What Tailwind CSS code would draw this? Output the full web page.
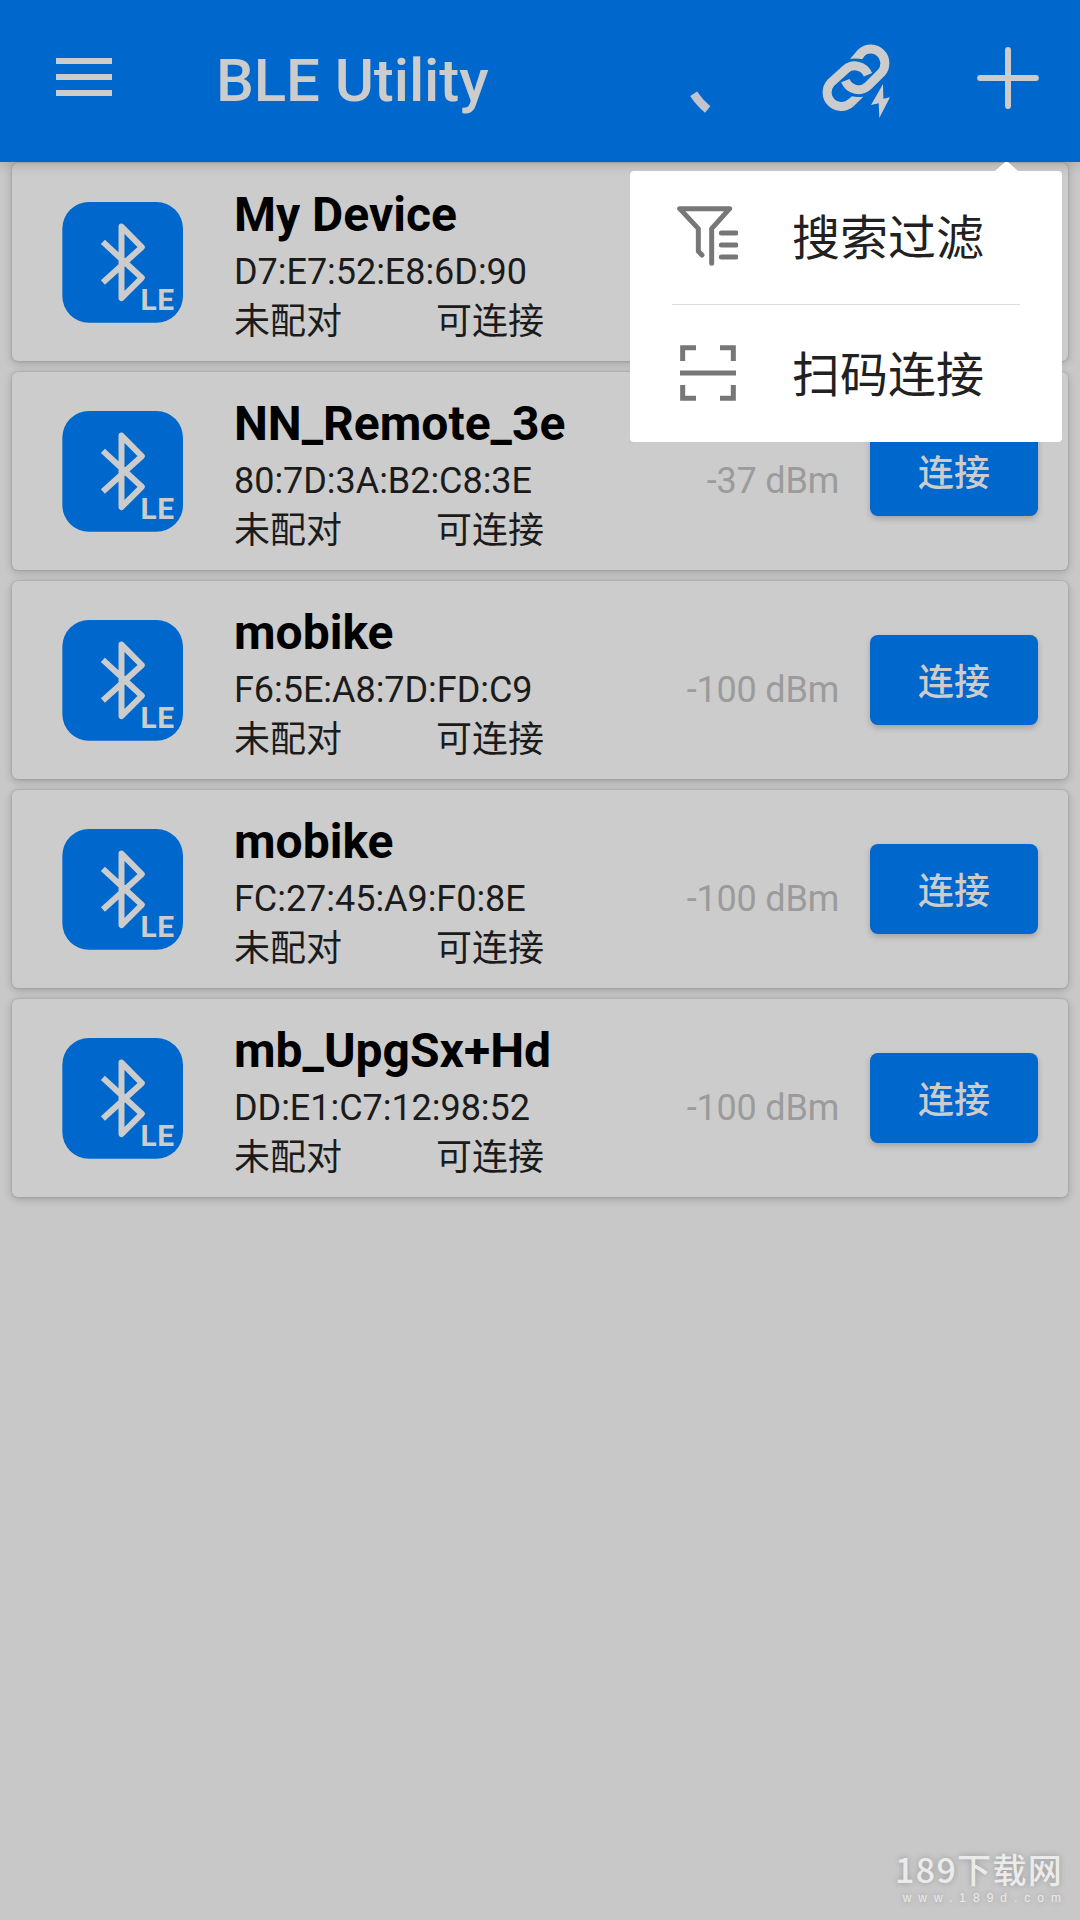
<!DOCTYPE html>
<html lang="zh-CN">
<head>
<meta charset="utf-8">
<title>BLE Utility</title>
<script src="https://cdn.jsdelivr.net/npm/@tailwindcss/browser@4"></script>
</head>
<body class="relative h-[1920px] w-[1080px] overflow-hidden bg-[#c8c8c8] font-['Roboto','Noto_Sans_CJK_SC',sans-serif]">
<header class="relative z-10 flex h-[162px] items-start bg-[#0067cc] text-[#ccc] shadow-[0_2px_12px_rgba(0,0,0,0.2)]">
  <button class="mt-[58px] ml-[56px] flex w-[56px] flex-none flex-col gap-[10px]" aria-label="Menu">
    <span class="h-[6px] w-full bg-[#ccc]"></span>
    <span class="h-[6px] w-full bg-[#ccc]"></span>
    <span class="h-[6px] w-full bg-[#ccc]"></span>
  </button>
  <h1 class="mt-[46px] ml-[104px] w-[424px] flex-none text-[60px] leading-[70px] font-medium tracking-[-0.1px]">BLE Utility</h1>
  <!-- actions: progress, quick link, add -->
  <svg class="mt-[20px] h-[110px] w-[440px] flex-none" viewBox="0 0 1320 330" fill="none">
    <path d="M161 221.500Q178 248 203 268.500" stroke="#c3c3cf" stroke-width="25"/>
    <path d="M664 98A42.500 42.500 0 0 1 724 158L685 197A42.500 42.500 0 0 1 616 182" stroke="#ccc" stroke-width="27"/>
    <path d="M655 88L630 117Q648 114 667 118L675 106Z" fill="#ccc"/>
    <path d="M684 164A42.500 42.500 0 0 0 617 148L572 189A42.500 42.500 0 0 0 632 249" stroke="#ccc" stroke-width="27"/>
    <path d="M641 259L670 230Q652 233 636 229L621 241Z" fill="#ccc"/>
    <path d="M729 192L693 255L716 250L718 294L750 232L730 236Z" fill="#ccc"/>
    <path d="M1020.500 174H1187.500M1104 90V258" stroke="#ccc" stroke-width="18" stroke-linecap="round"/>
  </svg>
</header>

<main id="devices" class="mt-px flex flex-col gap-[11px] px-3"></main>

<!-- popup menu -->
<nav class="absolute top-[162px] left-[630px] z-20 w-[432px]">
  <svg class="ml-[365px] block h-[9px] w-[23px]" viewBox="0 0 23 9"><path d="M0 9L9.500 .5Q11.500 -.7 13.500 .5L23 9Z" fill="#fff"/></svg>
  <div class="flex h-[271px] flex-col rounded-[4px] bg-white px-[42px]">
    <div class="flex h-[133px] items-center">
      <svg class="mb-[8px] h-[66px] w-[66px]" viewBox="156 150 198 198" fill="none" stroke="#777" stroke-width="15" stroke-linecap="round" stroke-linejoin="round">
        <path d="M246 312L235 301V233L179 173H329L275 233V337M304 246H349M304 282H349M304 318H349"/>
      </svg>
      <span class="mt-[2px] ml-[54px] text-[48px] leading-[56px] text-[#212121]">搜索过滤</span>
    </div>
    <div class="h-px flex-none bg-[#dcdcdc]"></div>
    <div class="flex h-[137px] items-center">
      <svg class="mb-[2px] h-[66px] w-[66px]" viewBox="156 570 198 198" fill="none" stroke="#777" stroke-width="15">
        <path d="M188 633V593H228M300 593H340V633M188 705V745H228M300 745H340V705M180 669H348"/>
      </svg>
      <span class="mt-[4px] ml-[54px] text-[48px] leading-[56px] text-[#212121]">扫码连接</span>
    </div>
  </div>
</nav>

<footer class="absolute top-[1847px] right-[17px] text-right text-[#ebebeb] [text-shadow:0_0_6px_rgba(0,0,0,0.25)]">
  <p class="font-['Noto_Sans_CJK_SC',sans-serif] text-[34px] leading-[44px] font-medium tracking-[1.3px] whitespace-nowrap">189下载网</p>
  <p class="-mr-[5px] font-['Liberation_Sans',sans-serif] text-[12px] leading-[14px] tracking-[7px] whitespace-nowrap">www.189d.com</p>
</footer>

<script>
const devices = [
  // the open menu covers the first row's signal level and button
  ["My Device", "D7:E7:52:E8:6D:90", null],
  ["NN_Remote_3e", "80:7D:3A:B2:C8:3E", "-37 dBm"],
  ["mobike", "F6:5E:A8:7D:FD:C9", "-100 dBm"],
  ["mobike", "FC:27:45:A9:F0:8E", "-100 dBm"],
  ["mb_UpgSx+Hd", "DD:E1:C7:12:98:52", "-100 dBm"],
];
document.getElementById("devices").innerHTML = devices.map(([name, mac, rssi]) => `
  <article class="flex h-[198px] items-start rounded-[6px] bg-[#ccc] shadow-[0_2px_8px_rgba(0,0,0,0.22),0_0_2px_rgba(0,0,0,0.2)]">
    <svg class="mt-[39px] ml-[50px] h-[121px] w-[121px] flex-none" viewBox="187 154 364 364" fill="none">
      <rect x="188" y="154" width="363" height="363" rx="80" fill="#0067cc"/>
      <path d="M310 274L427 382L366 443V228L427 290L310 396" stroke="#ccc" stroke-width="18" stroke-linejoin="round"/>
      <text x="423" y="480" font-family="Roboto" font-weight="700" font-size="90" fill="#ccc" textLength="101">LE</text>
    </svg>
    <div class="mt-[24px] ml-[51px] w-[370px] flex-none">
      <h2 class="text-[48px] leading-[56px] font-bold text-black">${name}</h2>
      <p class="text-[36px] leading-[58px] tracking-[-0.04px] text-[#1b1b1b]">${mac}</p>
      <p class="flex text-[36px] leading-[42px] text-[#1b1b1b]"><span class="w-[202px]">未配对</span><span>可连接</span></p>
    </div>
    ${rssi ? `<span class="mt-[88px] ml-auto text-[36px] leading-[42px] tracking-[-0.2px] text-[#9b9b9b]">${rssi}</span>
    <button class="mt-[54px] mr-[30px] ml-[31px] h-[90px] w-[168px] flex-none rounded-[8px] bg-[#0067cc] pt-[5px] text-[36px] leading-[42px] font-medium text-[#ccc] shadow-[0_3px_6px_rgba(0,0,0,0.2)]">连接</button>` : ""}
  </article>`).join("");
</script>
</body>
</html>
